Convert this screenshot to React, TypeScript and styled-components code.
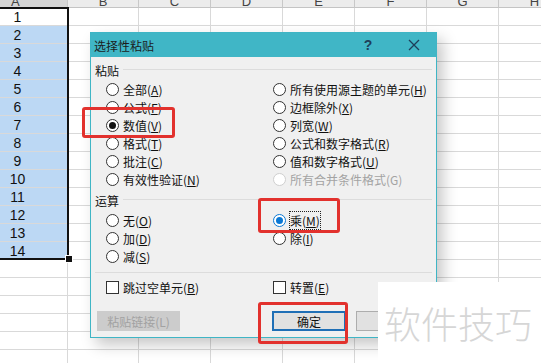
import React from 'react';
import styled, { createGlobalStyle } from 'styled-components';

const GlobalStyle = createGlobalStyle`
  html, body {
    margin: 0;
    padding: 0;
    width: 541px;
    height: 363px;
    overflow: hidden;
    background: #ffffff;
    font-family: "Noto Sans CJK SC", "Noto Sans", sans-serif;
  }
`;

const Page = styled.div`
  position: relative;
  width: 541px;
  height: 363px;
  overflow: hidden;
`;

const Sheet = styled.div`
  display: grid;
  grid-template-columns: 68px 71px repeat(6, 72px);
  grid-template-rows: 8px repeat(20, 18px);
`;

const ColHeader = styled.div<{ $active?: boolean }>`
  display: flex;
  align-items: flex-end;
  justify-content: ${p => (p.$active ? 'flex-start' : 'center')};
  padding-left: ${p => (p.$active ? '11px' : '0')};
  overflow: hidden;
  box-sizing: border-box;
  background: ${p => (p.$active ? '#d6d6d6' : '#ececec')};
  border-right: 1px solid #c8c8c8;
  border-bottom: 1px solid ${p => (p.$active ? '#d9b94a' : '#c4c4c4')};
  font-family: "Liberation Sans", sans-serif;
  font-size: 13px;
  line-height: 13px;
  color: #444;
  span {
    margin-bottom: -1px;
  }
`;

const Cell = styled.div<{ $selected?: boolean }>`
  box-sizing: border-box;
  border-right: 1px solid #d9d9d9;
  border-bottom: 1px solid #d9d9d9;
  background: ${p => (p.$selected ? '#bcd8f4' : '#ffffff')};
  font-family: "Liberation Sans", sans-serif;
  font-size: 14px;
  line-height: 18px;
  color: #111;
  text-align: center;
  padding-right: 32px;
`;

const SelectionFrame = styled.div`
  position: absolute;
  left: -3px;
  top: 7px;
  width: 68px;
  height: 249px;
  border: 2px solid #111;
`;

const FillHandle = styled.div`
  position: absolute;
  left: 65px;
  top: 255px;
  width: 6px;
  height: 6px;
  background: #111;
  border: 1px solid #fff;
`;

const Dialog = styled.div`
  position: absolute;
  left: 90px;
  top: 32px;
  width: 347px;
  height: 306px;
  box-sizing: border-box;
  border: 1px solid #3fb5c5;
  background: #f0f0f0;
  box-shadow: 6px 7px 14px rgba(0, 0, 0, 0.22);
  display: flex;
  flex-direction: column;
`;

const TitleBar = styled.div`
  height: 24px;
  flex: none;
  background: #40b6c6;
  display: flex;
  align-items: center;
  padding-left: 3px;
  font-size: 12px;
  color: #1c1c1c;
`;

const Title = styled.div`
  flex: 1;
`;

const TitleButton = styled.div<{ $w: number; $mr?: number }>`
  width: ${p => p.$w}px;
  margin-right: ${p => p.$mr || 0}px;
  display: flex;
  justify-content: center;
  align-items: center;
  color: #1e3f5a;
  font-family: "Liberation Sans", sans-serif;
  font-size: 14px;
  font-weight: bold;
`;

const Body = styled.div`
  padding: 4px 4px 0 4px;
  display: flex;
  flex-direction: column;
  font-size: 12px;
  color: #111;
`;

const GroupHeader = styled.div<{ $mt?: number }>`
  height: 18px;
  margin-top: ${p => p.$mt || 0}px;
  display: flex;
  align-items: center;
  gap: 4px;
  &::after {
    content: '';
    flex: 1;
    height: 1px;
    background: #dcdcdc;
    margin-top: -2px;
  }
`;

const OptionGrid = styled.div<{ $mt?: number }>`
  display: grid;
  grid-template-columns: 167px 1fr;
  grid-auto-rows: 18px;
  padding-left: 11px;
  margin-top: ${p => p.$mt || 0}px;
`;

const Option = styled.div<{ $disabled?: boolean }>`
  display: flex;
  align-items: center;
  gap: 4px;
  white-space: nowrap;
  color: ${p => (p.$disabled ? '#a3a3a3' : '#111')};
  u {
    text-decoration-thickness: 1px;
    text-underline-offset: 1px;
  }
`;

const Circle = styled.span<{ $checked?: boolean; $focus?: boolean; $disabled?: boolean }>`
  width: 13px;
  height: 13px;
  box-sizing: border-box;
  border-radius: 50%;
  border: 1px solid
    ${p => (p.$focus ? '#0a78d4' : p.$disabled ? '#cfcfcf' : '#333')};
  background: #fff;
  display: flex;
  align-items: center;
  justify-content: center;
  flex: none;
  &::after {
    content: '';
    display: ${p => (p.$checked ? 'block' : 'none')};
    width: 7px;
    height: 7px;
    border-radius: 50%;
    background: ${p => (p.$focus ? '#0a78d4' : '#111')};
  }
`;

const Box = styled.span`
  width: 13px;
  height: 13px;
  box-sizing: border-box;
  border: 1px solid #333;
  background: #fff;
  flex: none;
`;

const FocusText = styled.span`
  outline: 1px dotted #222;
  outline-offset: 0;
  line-height: 14px;
`;

const Divider = styled.div`
  height: 1px;
  background: #dcdcdc;
  margin-top: 7px;
`;

const ButtonRow = styled.div`
  display: flex;
  margin-top: 15px;
  padding-left: 2px;
`;

const Button = styled.div<{ $variant?: 'default' | 'disabled' | 'primary' }>`
  height: 20px;
  box-sizing: border-box;
  display: flex;
  align-items: center;
  justify-content: center;
  font-size: 12px;
  background: ${p => (p.$variant === 'disabled' ? '#cccccc' : '#e1e1e1')};
  color: ${p => (p.$variant === 'disabled' ? '#a2a2a2' : '#111')};
  border: ${p =>
    p.$variant === 'primary'
      ? '2px solid #1f6fb6'
      : p.$variant === 'disabled'
      ? 'none'
      : '1px solid #adadad'};
`;

const LinkButton = styled(Button)`
  width: 83px;
  margin-right: 92px;
`;

const OkButton = styled(Button)`
  width: 74px;
  margin-right: 10px;
`;

const CancelButton = styled(Button)`
  width: 74px;
`;

const Mark = styled.div<{ $l: number; $t: number; $w: number; $h: number }>`
  position: absolute;
  left: ${p => p.$l}px;
  top: ${p => p.$t}px;
  width: ${p => p.$w}px;
  height: ${p => p.$h}px;
  box-sizing: border-box;
  border: 3px solid #e2312d;
  border-radius: 3px;
`;

const Watermark = styled.div`
  position: absolute;
  left: 378px;
  top: 282px;
  right: 0;
  bottom: 0;
  background: #ffffff;
  display: flex;
  align-items: center;
  padding-left: 6px;
  font-size: 37px;
  font-weight: 300;
  color: #d6d6d6;
`;

const columns = ['A', 'B', 'C', 'D', 'E', 'F', 'G', 'H'];

type Opt = { label: React.ReactNode; checked?: boolean; focus?: boolean; disabled?: boolean };

const k = (text: string, key: string) => (
  <>
    {text}(<u>{key}</u>)
  </>
);

const pasteOptions: Opt[] = [
  { label: k('全部', 'A') },
  { label: k('所有使用源主题的单元', 'H') },
  { label: k('公式', 'F') },
  { label: k('边框除外', 'X') },
  { label: k('数值', 'V'), checked: true },
  { label: k('列宽', 'W') },
  { label: k('格式', 'T') },
  { label: k('公式和数字格式', 'R') },
  { label: k('批注', 'C') },
  { label: k('值和数字格式', 'U') },
  { label: k('有效性验证', 'N') },
  { label: '所有合并条件格式(G)', disabled: true },
];

const opOptions: Opt[] = [
  { label: k('无', 'O') },
  { label: <FocusText>乘(<u>M</u>)</FocusText>, checked: true, focus: true },
  { label: k('加', 'D') },
  { label: k('除', 'I') },
  { label: k('减', 'S') },
];

const Radio: React.FC<{ opt: Opt }> = ({ opt }) => (
  <Option $disabled={opt.disabled}>
    <Circle $checked={opt.checked} $focus={opt.focus} $disabled={opt.disabled} />
    <span>{opt.label}</span>
  </Option>
);

const App: React.FC = () => {
  const rows = Array.from({ length: 20 }, (_, i) => i + 1);

  return (
    <>
      <GlobalStyle />
      <Page>
        <Sheet>
          {columns.map(c => (
            <ColHeader key={c} $active={c === 'A'}>
              <span>{c}</span>
            </ColHeader>
          ))}
          {rows.map(r =>
            columns.map(c => (
              <Cell key={c + r} $selected={c === 'A' && r > 1 && r <= 14}>
                {c === 'A' && r <= 14 ? r : null}
              </Cell>
            )),
          )}
        </Sheet>
        <SelectionFrame />
        <FillHandle />

        <Dialog>
          <TitleBar>
            <Title>选择性粘贴</Title>
            <TitleButton $w={24} $mr={12}>?</TitleButton>
            <TitleButton $w={44}>
              <svg width="12" height="12" viewBox="0 0 12 12">
                <path d="M1 1 L11 11 M11 1 L1 11" stroke="#1e3f5a" strokeWidth="1.3" />
              </svg>
            </TitleButton>
          </TitleBar>
          <Body>
            <GroupHeader>粘贴</GroupHeader>
            <OptionGrid $mt={1}>
              {pasteOptions.map((o, i) => (
                <Radio key={i} opt={o} />
              ))}
            </OptionGrid>
            <GroupHeader $mt={3}>运算</GroupHeader>
            <OptionGrid $mt={2}>
              {opOptions.map((o, i) => (
                <Radio key={i} opt={o} />
              ))}
            </OptionGrid>
            <Divider />
            <OptionGrid $mt={5}>
              <Option>
                <Box />
                <span>{k('跳过空单元', 'B')}</span>
              </Option>
              <Option>
                <Box />
                <span>{k('转置', 'E')}</span>
              </Option>
            </OptionGrid>
            <ButtonRow>
              <LinkButton $variant="disabled">粘贴链接(L)</LinkButton>
              <OkButton $variant="primary">确定</OkButton>
              <CancelButton>取消</CancelButton>
            </ButtonRow>
          </Body>
        </Dialog>

        <Mark $l={82} $t={107} $w={93} $h={31} />
        <Mark $l={258} $t={198} $w={82} $h={35} />
        <Mark $l={258} $t={302} $w={90} $h={42} />

        <Watermark>软件技巧</Watermark>
      </Page>
    </>
  );
};

export default App;
